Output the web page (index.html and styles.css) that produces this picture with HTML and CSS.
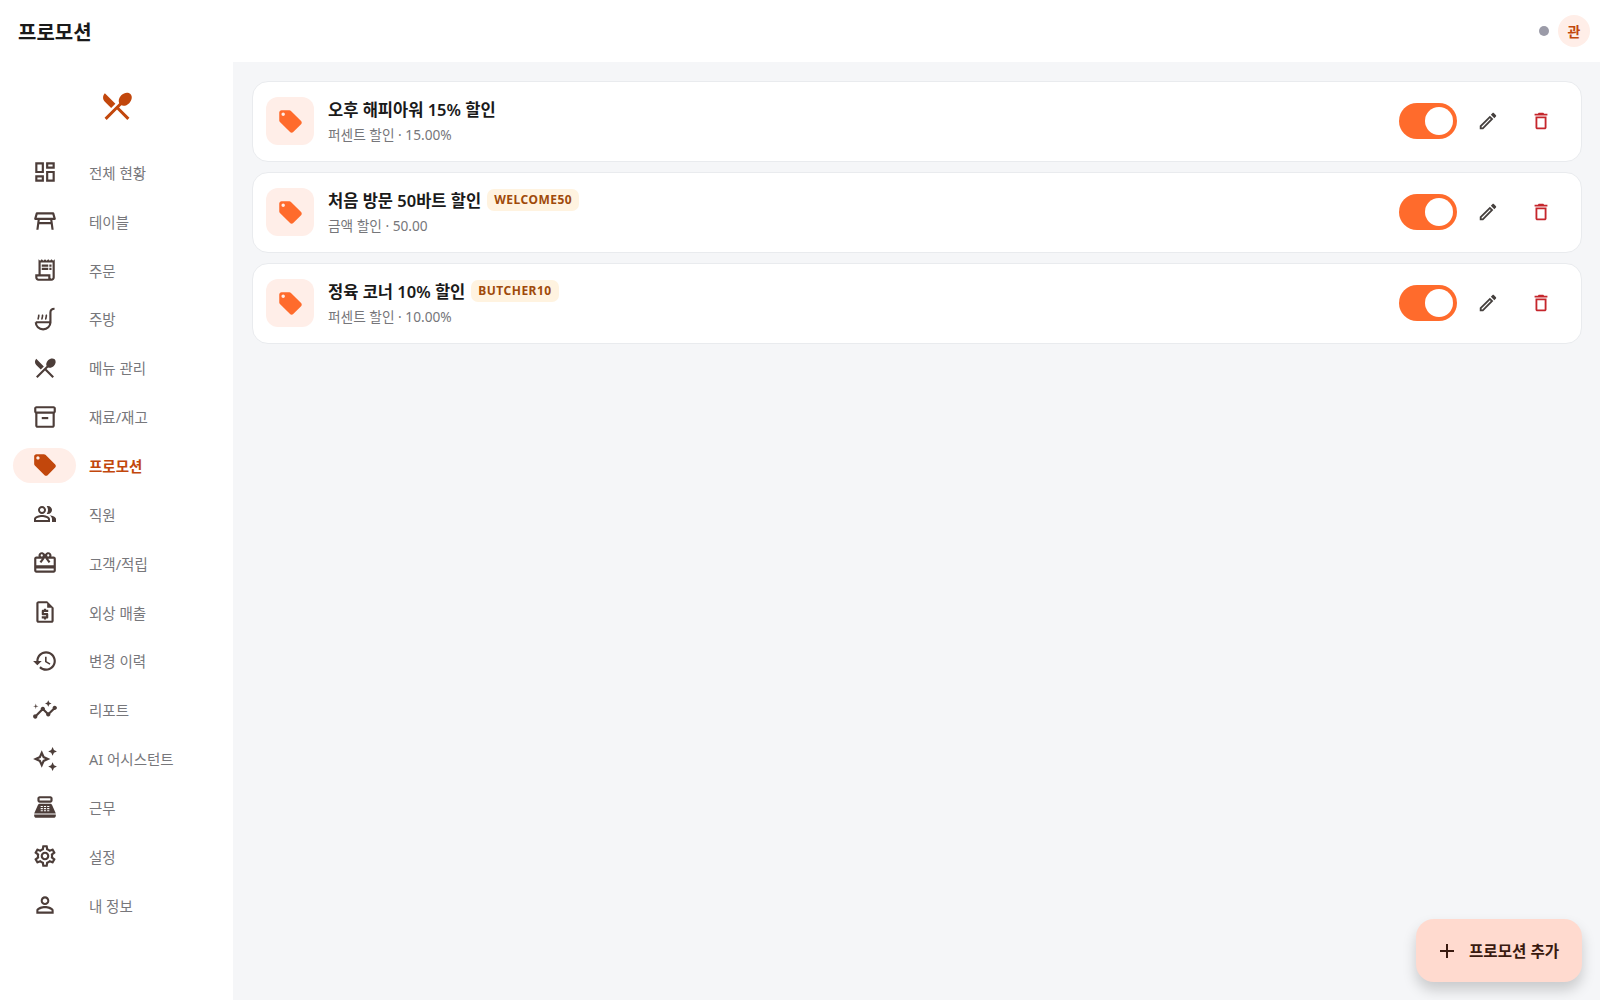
FILE: index.html
```html
<!DOCTYPE html>
<html lang="ko">
<head>
  <meta charset="UTF-8">
  <meta name="viewport" content="width=device-width, initial-scale=1.0">
  <title>프로모션</title>
  <link rel="stylesheet" href="styles.css">
</head>
<body>

  <!-- Barra superior -->
  <header class="topbar">
    <h1 class="topbar-title">프로모션</h1>
    <div class="topbar-user">
      <span class="status-dot"></span>
      <span class="avatar">관</span>
    </div>
  </header>

  <div class="layout">
    <!-- Menu lateral -->
    <nav class="sidebar">
      <div class="logo">
        <svg viewBox="0 0 24 24"><path d="M8.1 13.34l2.83-2.83L3.91 3.5c-1.56 1.56-1.56 4.09 0 5.66l4.19 4.18zm6.78-1.81c1.53.71 3.68.21 5.27-1.38 1.91-1.91 2.28-4.65.81-6.12-1.46-1.46-4.2-1.1-6.12.81-1.59 1.59-2.09 3.74-1.38 5.27L3.7 19.87l1.41 1.41L12 14.41l6.88 6.88 1.41-1.41L13.41 13l1.47-1.47z"/></svg>
      </div>

      <a class="nav-item">
        <span class="nav-icon"><svg viewBox="0 0 24 24"><path d="M19 5v2h-4V5h4M9 5v6H5V5h4m10 8v6h-4v-6h4M9 17v2H5v-2h4M21 3h-8v6h8V3zM11 3H3v10h8V3zm10 8h-8v10h8V11zm-10 4H3v6h8v-6z"/></svg></span>
        <span class="nav-label">전체 현황</span>
      </a>
      <a class="nav-item">
        <span class="nav-icon"><svg viewBox="0 0 24 24"><path d="M21.96 9.73l-1.43-5c-.12-.43-.51-.73-.96-.73H4.43c-.45 0-.84.3-.96.73l-1.43 5c-.18.63.3 1.27.96 1.27h2.2L4 20h2l.67-5h10.67l.66 5h2l-1.2-9H21c.66 0 1.14-.64.96-1.27zM6.93 13l.27-2h9.6l.27 2H6.93zM4.33 9l.86-3h13.63l.86 3H4.33z"/></svg></span>
        <span class="nav-label">테이블</span>
      </a>
      <a class="nav-item">
        <span class="nav-icon"><svg viewBox="0 0 24 24"><path d="M19.5 3.5L18 2l-1.5 1.5L15 2l-1.5 1.5L12 2l-1.5 1.5L9 2 7.5 3.5 6 2v14H3v3c0 1.66 1.34 3 3 3h12c1.66 0 3-1.34 3-3V2l-1.5 1.5zM15 20H6c-.55 0-1-.45-1-1v-1h10v2zm4-1c0 .55-.45 1-1 1s-1-.45-1-1v-3H8V5h11v14z"/><path d="M9 7h6v2H9zM16 7h2v2h-2zM9 10h6v2H9zM16 10h2v2h-2z"/></svg></span>
        <span class="nav-label">주문</span>
      </a>
      <a class="nav-item">
        <span class="nav-icon"><svg class="icon-line" viewBox="0 0 24 24"><path d="M3.5 15h13.5V6c0-2.2 1.2-3.5 3.8-3.5M3.5 15c0 3.8 2.900 6.500 6.750 6.500S17 18.800 17 15"/><path class="thin" d="M6 12.500c-1.200-1.400 1.200-2.600 0-4.500M9.500 12.500c-1.200-1.400 1.200-2.600 0-4.500M13 12.500c-1.200-1.400 1.200-2.600 0-4.500"/></svg></span>
        <span class="nav-label">주방</span>
      </a>
      <a class="nav-item">
        <span class="nav-icon"><svg viewBox="0 0 24 24"><path d="M8.1 13.34l2.83-2.83L3.91 3.5c-1.56 1.56-1.56 4.09 0 5.66l4.19 4.18zm6.78-1.81c1.53.71 3.68.21 5.27-1.38 1.91-1.91 2.28-4.65.81-6.12-1.46-1.46-4.2-1.1-6.12.81-1.59 1.59-2.09 3.74-1.38 5.27L3.7 19.87l1.41 1.41L12 14.41l6.88 6.88 1.41-1.41L13.41 13l1.47-1.47z"/></svg></span>
        <span class="nav-label">메뉴 관리</span>
      </a>
      <a class="nav-item">
        <span class="nav-icon"><svg viewBox="0 0 24 24"><path d="M20 2H4c-1 0-2 .9-2 2v3.010c0 .72.43 1.340 1 1.690V20c0 1.100 1.100 2 2 2h14c.9 0 2-.9 2-2V8.700c.57-.35 1-.97 1-1.690V4c0-1.100-1-2-2-2zm-1 18H5V9h14v11zm1-13H4V4h16v3z"/><path d="M9 12h6v2H9z"/></svg></span>
        <span class="nav-label">재료/재고</span>
      </a>
      <a class="nav-item active">
        <span class="nav-icon"><svg viewBox="0 0 24 24"><path d="M21.41 11.58l-9-9C12.05 2.22 11.55 2 11 2H4c-1.1 0-2 .9-2 2v7c0 .55.22 1.05.59 1.42l9 9c.36.36.86.58 1.41.58.55 0 1.05-.22 1.41-.59l7-7c.37-.36.59-.86.59-1.41 0-.55-.23-1.06-.59-1.42zM5.5 7C4.67 7 4 6.33 4 5.5S4.67 4 5.5 4 7 4.67 7 5.5 6.33 7 5.5 7z"/></svg></span>
        <span class="nav-label">프로모션</span>
      </a>
      <a class="nav-item">
        <span class="nav-icon"><svg class="icon-small" viewBox="0 0 24 24"><path d="M16.67 13.13C18.04 14.060 19 15.320 19 17v3h4v-3c0-2.180-3.570-3.470-6.330-3.870z"/><path d="M15 12c2.210 0 4-1.790 4-4s-1.790-4-4-4c-.47 0-.91.1-1.330.24C14.500 5.270 15 6.580 15 8s-.5 2.730-1.330 3.760c.42.14.86.24 1.330.24z"/><path d="M9 12c2.210 0 4-1.790 4-4s-1.790-4-4-4-4 1.790-4 4 1.790 4 4 4zm0-6c1.100 0 2 .9 2 2s-.9 2-2 2-2-.9-2-2 .9-2 2-2z"/><path d="M9 13c-2.670 0-8 1.340-8 4v3h16v-3c0-2.660-5.330-4-8-4zm6 5H3v-.99C3.200 16.290 6.300 15 9 15s5.800 1.290 6 2v1z"/></svg></span>
        <span class="nav-label">직원</span>
      </a>
      <a class="nav-item">
        <span class="nav-icon"><svg viewBox="0 0 24 24"><path d="M20 6h-2.180c.11-.31.18-.65.18-1 0-1.660-1.340-3-3-3-1.050 0-1.960.54-2.500 1.350l-.5.67-.5-.68C10.960 2.540 10.050 2 9 2 7.340 2 6 3.340 6 5c0 .35.07.69.18 1H4c-1.110 0-1.990.89-1.990 2L2 19c0 1.110.89 2 2 2h16c1.110 0 2-.89 2-2V8c0-1.110-.89-2-2-2zm-5-2c.55 0 1 .45 1 1s-.45 1-1 1-1-.45-1-1 .45-1 1-1zM9 4c.55 0 1 .45 1 1s-.45 1-1 1-1-.45-1-1 .45-1 1-1zm11 15H4v-2h16v2zm0-5H4V8h5.080L7 10.830 8.620 12 11 8.760l1-1.360 1 1.360L15.380 12 17 10.830 14.920 8H20v6z"/></svg></span>
        <span class="nav-label">고객/적립</span>
      </a>
      <a class="nav-item">
        <span class="nav-icon"><svg viewBox="0 0 24 24"><path d="M14 2H6c-1.100 0-2 .9-2 2v16c0 1.100.9 2 2 2h12c1.100 0 2-.9 2-2V8l-6-6zM6 20V4h8v4h4v12H6z"/><path d="M11 19h2v-1h1c.55 0 1-.45 1-1v-3c0-.55-.45-1-1-1h-3v-1h4v-2h-2V9h-2v1h-1c-.55 0-1 .45-1 1v3c0 .55.45 1 1 1h3v1H9v2h2v1z"/></svg></span>
        <span class="nav-label">외상 매출</span>
      </a>
      <a class="nav-item">
        <span class="nav-icon"><svg viewBox="0 0 24 24"><path d="M13 3c-4.970 0-9 4.030-9 9H1l3.890 3.890.07.14L9 12H6c0-3.870 3.130-7 7-7s7 3.130 7 7-3.130 7-7 7c-1.930 0-3.680-.79-4.940-2.060l-1.420 1.420C8.270 19.990 10.510 21 13 21c4.970 0 9-4.030 9-9s-4.030-9-9-9zm-1 5v5l4.280 2.540.72-1.210-3.500-2.080V8H12z"/></svg></span>
        <span class="nav-label">변경 이력</span>
      </a>
      <a class="nav-item">
        <span class="nav-icon"><svg viewBox="0 0 24 24"><path d="M21 8c-1.450 0-2.260 1.440-1.930 2.510l-3.550 3.560c-.3-.09-.74-.09-1.040 0l-2.550-2.550C12.270 10.450 11.460 9 10 9c-1.450 0-2.270 1.440-1.930 2.520l-4.560 4.550C2.440 15.740 1 16.550 1 18c0 1.100.9 2 2 2 1.450 0 2.260-1.440 1.930-2.510l4.550-4.560c.3.09.74.09 1.040 0l2.550 2.550C12.730 16.550 13.540 18 15 18c1.450 0 2.270-1.440 1.930-2.520l3.560-3.550c1.070.33 2.510-.48 2.510-1.930 0-1.100-.9-2-2-2z"/><path d="M15 9l.94-2.070L18 6l-2.060-.93L15 3l-.92 2.070L12 6l2.080.93zM3.500 11L4 9l2-.5L4 8l-.5-2L3 8l-2 .5L3 9z"/></svg></span>
        <span class="nav-label">리포트</span>
      </a>
      <a class="nav-item">
        <span class="nav-icon"><svg viewBox="0 0 24 24"><path d="M19 9l1.250-2.750L23 5l-2.750-1.250L19 1l-1.250 2.750L15 5l2.750 1.250zm0 6l-1.250 2.750L15 19l2.750 1.250L19 23l1.250-2.750L23 19l-2.750-1.250zM11.500 9.500L9 4 6.500 9.500 1 12l5.500 2.500L9 20l2.500-5.500L17 12l-5.500-2.500zm-1.510 3.490L9 15.170l-.99-2.180L5.830 12l2.180-.99L9 8.830l.99 2.180 2.180.99-2.180.99z"/></svg></span>
        <span class="nav-label">AI 어시스턴트</span>
      </a>
      <a class="nav-item">
        <span class="nav-icon"><svg viewBox="0 0 24 24"><path d="M17 2H7c-1.100 0-2 .9-2 2v2c0 1.100.9 2 2 2h10c1.100 0 2-.9 2-2V4c0-1.100-.9-2-2-2zm0 4H7V4h10v2zm3 16H4c-1.100 0-2-.9-2-2v-1h20v1c0 1.100-.9 2-2 2z"/><path fill-rule="evenodd" d="M18.530 10.190C18.210 9.470 17.490 9 16.700 9H7.300c-.79 0-1.510.47-1.830 1.190L2 18h20l-3.470-7.810zM8 11h2v1H8zm3 0h2v1h-2zm3 0h2v1h-2zM8 13h2v1H8zm3 0h2v1h-2zm3 0h2v1h-2zM8 15h2v1H8zm3 0h2v1h-2zm3 0h2v1h-2z"/></svg></span>
        <span class="nav-label">근무</span>
      </a>
      <a class="nav-item">
        <span class="nav-icon"><svg viewBox="0 0 24 24"><path d="M19.430 12.980c.04-.32.07-.64.07-.98 0-.34-.03-.66-.07-.98l2.110-1.650c.19-.15.24-.42.12-.64l-2-3.460c-.09-.16-.26-.25-.44-.25-.06 0-.12.01-.17.03l-2.490 1c-.52-.4-1.080-.73-1.690-.98l-.38-2.650C14.460 2.180 14.250 2 14 2h-4c-.25 0-.46.18-.49.42l-.38 2.650c-.61.25-1.170.59-1.690.98l-2.490-1c-.06-.02-.12-.03-.18-.03-.17 0-.34.09-.43.25l-2 3.460c-.13.22-.07.49.12.64l2.110 1.650c-.04.32-.07.65-.07.98 0 .33.03.66.07.98l-2.110 1.650c-.19.15-.24.42-.12.64l2 3.460c.09.16.26.25.44.25.06 0 .12-.01.17-.03l2.490-1c.52.4 1.080.73 1.690.98l.38 2.650c.03.24.24.42.49.42h4c.25 0 .46-.18.49-.42l.38-2.650c.61-.25 1.170-.59 1.690-.98l2.490 1c.06.02.12.03.18.03.17 0 .34-.09.43-.25l2-3.460c.12-.22.07-.49-.12-.64l-2.110-1.650zm-1.980-1.710c.04.31.05.52.05.73 0 .21-.02.43-.05.73l-.14 1.130.89.7 1.080.84-.7 1.210-1.270-.51-1.040-.42-.9.68c-.43.32-.84.56-1.250.73l-1.060.43-.16 1.130-.2 1.350h-1.400l-.19-1.350-.16-1.130-1.060-.43c-.43-.18-.83-.41-1.230-.71l-.91-.7-1.060.43-1.270.51-.7-1.210 1.080-.84.89-.7-.14-1.130c-.03-.31-.05-.54-.05-.74s.02-.43.05-.73l.14-1.130-.89-.7-1.080-.84.7-1.210 1.270.51 1.040.42.9-.68c.43-.32.84-.56 1.250-.73l1.060-.43.16-1.130.2-1.350h1.390l.19 1.350.16 1.130 1.060.43c.43.18.83.41 1.230.71l.91.7 1.060-.43 1.270-.51.7 1.210-1.070.85-.89.7.14 1.130zM12 8c-2.210 0-4 1.790-4 4s1.790 4 4 4 4-1.790 4-4-1.790-4-4-4zm0 6c-1.100 0-2-.9-2-2s.9-2 2-2 2 .9 2 2-.9 2-2 2z"/></svg></span>
        <span class="nav-label">설정</span>
      </a>
      <a class="nav-item">
        <span class="nav-icon"><svg viewBox="0 0 24 24"><path d="M12 5.900c1.160 0 2.100.94 2.100 2.100s-.94 2.100-2.100 2.100S9.900 9.160 9.900 8s.94-2.100 2.100-2.100m0 9c2.970 0 6.100 1.460 6.100 2.100v1.100H5.900V17c0-.64 3.130-2.100 6.100-2.100M12 4C9.790 4 8 5.790 8 8s1.790 4 4 4 4-1.790 4-4-1.790-4-4-4zm0 9c-2.670 0-8 1.340-8 4v3h16v-3c0-2.660-5.330-4-8-4z"/></svg></span>
        <span class="nav-label">내 정보</span>
      </a>
    </nav>

    <!-- Lista de promociones -->
    <main class="content">
      <div class="promo-card">
        <div class="promo-icon"><svg viewBox="0 0 24 24"><path d="M21.41 11.58l-9-9C12.05 2.22 11.55 2 11 2H4c-1.1 0-2 .9-2 2v7c0 .55.22 1.05.59 1.42l9 9c.36.36.86.58 1.41.58.55 0 1.05-.22 1.41-.59l7-7c.37-.36.59-.86.59-1.41 0-.55-.23-1.06-.59-1.42zM5.5 7C4.67 7 4 6.33 4 5.5S4.67 4 5.5 4 7 4.67 7 5.5 6.33 7 5.5 7z"/></svg></div>
        <div class="promo-info">
          <div class="promo-title"><span>오후 해피아워 15% 할인</span></div>
          <div class="promo-sub">퍼센트 할인 · 15.00%</div>
        </div>
        <span class="switch"><span class="knob"></span></span>
        <button class="icon-btn edit"><svg viewBox="0 0 24 24"><path d="M14.060 9.020l.92.92L5.920 19H5v-.92l9.060-9.060M17.660 3c-.25 0-.51.1-.7.29l-1.830 1.830 3.750 3.750 1.830-1.830c.39-.39.39-1.020 0-1.410l-2.340-2.340c-.2-.2-.45-.29-.71-.29zm-3.600 3.190L3 17.250V21h3.750L17.810 9.940l-3.750-3.750z"/></svg></button>
        <button class="icon-btn delete"><svg viewBox="0 0 24 24"><path d="M16 9v10H8V9h8m-1.500-6h-5l-1 1H5v2h14V4h-3.500l-1-1zM18 7H6v12c0 1.100.9 2 2 2h8c1.100 0 2-.9 2-2V7z"/></svg></button>
      </div>

      <div class="promo-card">
        <div class="promo-icon"><svg viewBox="0 0 24 24"><path d="M21.41 11.58l-9-9C12.05 2.22 11.55 2 11 2H4c-1.1 0-2 .9-2 2v7c0 .55.22 1.05.59 1.42l9 9c.36.36.86.58 1.41.58.55 0 1.05-.22 1.41-.59l7-7c.37-.36.59-.86.59-1.41 0-.55-.23-1.06-.59-1.42zM5.5 7C4.67 7 4 6.33 4 5.5S4.67 4 5.5 4 7 4.67 7 5.5 6.33 7 5.5 7z"/></svg></div>
        <div class="promo-info">
          <div class="promo-title"><span>처음 방문 50바트 할인</span><span class="code">WELCOME50</span></div>
          <div class="promo-sub">금액 할인 · 50.00</div>
        </div>
        <span class="switch"><span class="knob"></span></span>
        <button class="icon-btn edit"><svg viewBox="0 0 24 24"><path d="M14.060 9.020l.92.92L5.920 19H5v-.92l9.060-9.060M17.660 3c-.25 0-.51.1-.7.29l-1.830 1.830 3.750 3.750 1.830-1.830c.39-.39.39-1.020 0-1.410l-2.340-2.340c-.2-.2-.45-.29-.71-.29zm-3.600 3.190L3 17.250V21h3.750L17.810 9.940l-3.750-3.750z"/></svg></button>
        <button class="icon-btn delete"><svg viewBox="0 0 24 24"><path d="M16 9v10H8V9h8m-1.500-6h-5l-1 1H5v2h14V4h-3.500l-1-1zM18 7H6v12c0 1.100.9 2 2 2h8c1.100 0 2-.9 2-2V7z"/></svg></button>
      </div>

      <div class="promo-card">
        <div class="promo-icon"><svg viewBox="0 0 24 24"><path d="M21.41 11.58l-9-9C12.05 2.22 11.55 2 11 2H4c-1.1 0-2 .9-2 2v7c0 .55.22 1.05.59 1.42l9 9c.36.36.86.58 1.41.58.55 0 1.05-.22 1.41-.59l7-7c.37-.36.59-.86.59-1.41 0-.55-.23-1.06-.59-1.42zM5.5 7C4.67 7 4 6.33 4 5.5S4.67 4 5.5 4 7 4.67 7 5.5 6.33 7 5.5 7z"/></svg></div>
        <div class="promo-info">
          <div class="promo-title"><span>정육 코너 10% 할인</span><span class="code">BUTCHER10</span></div>
          <div class="promo-sub">퍼센트 할인 · 10.00%</div>
        </div>
        <span class="switch"><span class="knob"></span></span>
        <button class="icon-btn edit"><svg viewBox="0 0 24 24"><path d="M14.060 9.020l.92.92L5.920 19H5v-.92l9.060-9.060M17.660 3c-.25 0-.51.1-.7.29l-1.830 1.830 3.750 3.750 1.830-1.830c.39-.39.39-1.020 0-1.410l-2.340-2.340c-.2-.2-.45-.29-.71-.29zm-3.600 3.190L3 17.250V21h3.750L17.810 9.940l-3.750-3.750z"/></svg></button>
        <button class="icon-btn delete"><svg viewBox="0 0 24 24"><path d="M16 9v10H8V9h8m-1.500-6h-5l-1 1H5v2h14V4h-3.500l-1-1zM18 7H6v12c0 1.100.9 2 2 2h8c1.100 0 2-.9 2-2V7z"/></svg></button>
      </div>
    </main>
  </div>

  <!-- Boton flotante -->
  <button class="fab">
    <svg viewBox="0 0 24 24"><path d="M19 13h-6v6h-2v-6H5v-2h6V5h2v6h6v2z"/></svg>
    <span>프로모션 추가</span>
  </button>

</body>
</html>
```

FILE: styles.css
```css
* {
  box-sizing: border-box;
}

html, body {
  height: 100%;
}

body {
  margin: 0;
  overflow: hidden;
  background-color: #f5f6f8;
  color: #1a1a1a;
  font-family: "Noto Sans", "Noto Sans CJK KR", sans-serif;
}

svg {
  display: block;
  fill: currentColor;
}

.topbar {
  height: 62px;
  display: flex;
  align-items: center;
  justify-content: space-between;
  padding: 0 10px 0 18px;
  background-color: white;
}

.topbar-title {
  margin: 4px 0 0;
  font-size: 20px;
  font-weight: 700;
  line-height: 28px;
}

.topbar-user {
  display: flex;
  align-items: center;
  gap: 9px;
}

.status-dot {
  width: 10px;
  height: 10px;
  border-radius: 50%;
  background-color: #9b9ba8;
}

.avatar {
  width: 32px;
  height: 32px;
  display: flex;
  align-items: center;
  justify-content: center;
  border-radius: 50%;
  background-color: #ffeee8;
  color: #c2470c;
  font-size: 14px;
  font-weight: 700;
}

.layout {
  display: flex;
  height: 938px;
}

.sidebar {
  width: 233px;
  flex-shrink: 0;
  background-color: white;
}

.logo {
  height: 86px;
  display: flex;
  justify-content: center;
  padding-top: 26px;
  color: #c2470c;
}

.logo svg {
  width: 36px;
  height: 36px;
}

.nav-item {
  height: 48.85px;
  display: flex;
  align-items: center;
  gap: 13px;
  padding-left: 13px;
  color: #4c3d39;
}

.nav-icon {
  width: 63px;
  height: 35px;
  display: flex;
  align-items: center;
  justify-content: center;
  border-radius: 18px;
}

.nav-icon svg {
  width: 26px;
  height: 26px;
}

.nav-icon .icon-small {
  width: 24px;
  height: 24px;
}

.nav-label {
  font-size: 14.500px;
  color: #77777b;
}

.nav-item.active {
  color: #c2470c;
}

.nav-item.active .nav-icon {
  background-color: #ffeee8;
}

.nav-item.active .nav-label {
  color: #c2470c;
  font-weight: 700;
}

.content {
  flex: 1;
  display: flex;
  flex-direction: column;
  gap: 9.500px;
  padding: 18.500px 18px 0 18.500px;
}

.promo-card {
  height: 81.500px;
  display: flex;
  align-items: center;
  padding: 0 14px 0 13.500px;
  background-color: white;
  border: 1px solid #e9ebee;
  border-radius: 16px;
}

.promo-icon {
  width: 48px;
  height: 48px;
  display: flex;
  align-items: center;
  justify-content: center;
  border-radius: 12px;
  background-color: #ffeee8;
  color: #ff6b2c;
}

.promo-icon svg {
  width: 27px;
  height: 27px;
}

.promo-info {
  flex: 1;
  margin-left: 14px;
  padding-bottom: 3px;
}

.promo-title {
  display: flex;
  align-items: center;
  gap: 6px;
  height: 26px;
  font-size: 16.500px;
  font-weight: 600;
}

.promo-sub {
  margin-top: 2.500px;
  font-size: 13.700px;
  color: #76767a;
}

.code {
  padding: 3px 7px;
  border-radius: 7px;
  background-color: #fff3e0;
  color: #a04a0a;
  font-size: 12px;
  line-height: 16px;
  font-weight: 700;
  letter-spacing: 0.5px;
}

.switch {
  width: 58px;
  height: 36px;
  display: flex;
  align-items: center;
  justify-content: flex-end;
  padding-right: 4px;
  margin-bottom: 1px;
  border-radius: 18px;
  background-color: #ff6b2c;
}

.knob {
  width: 28px;
  height: 28px;
  border-radius: 50%;
  background-color: white;
}

.icon-btn {
  width: 22px;
  height: 22px;
  padding: 0;
  margin-bottom: 1px;
  border: none;
  background: none;
}

.icon-btn.edit {
  margin-left: 20px;
  color: #45403e;
}

.icon-btn.delete {
  margin: 0 15px 1px 31px;
  color: #c5262c;
}

.fab {
  position: absolute;
  right: 18px;
  bottom: 18px;
  width: 166px;
  height: 63px;
  display: flex;
  align-items: center;
  gap: 10px;
  padding: 0 0 0 19px;
  border: none;
  border-radius: 18px;
  background-color: #ffdacf;
  color: #3a1a10;
  font-family: inherit;
  font-size: 15.600px;
  font-weight: 600;
  box-shadow: 0 8px 14px rgba(0,0,0,0.18);
}

.fab svg {
  width: 24px;
  height: 24px;
}

.icon-line {
  fill: none;
  stroke: currentColor;
  stroke-width: 2;
}

.icon-line .thin {
  stroke-width: 1.500;
}
```
